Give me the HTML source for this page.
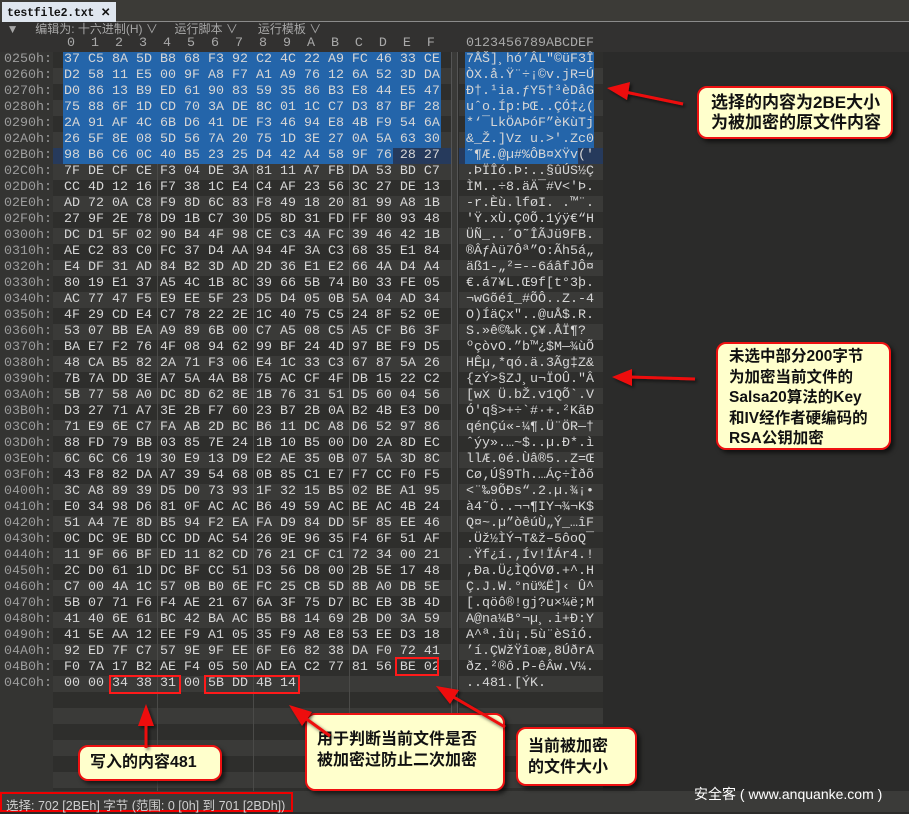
<!DOCTYPE html>
<html><head><meta charset="utf-8"><style>
*{margin:0;padding:0;box-sizing:border-box}
body{width:909px;height:812px;overflow:hidden;background:#2b2b2a;position:relative;font-family:"Liberation Mono",monospace;}
.a{position:absolute}
#top{left:0;top:0;width:909px;height:22px;background:#3c3b37}
#tab{left:2px;top:2px;width:114px;height:20px;background:#dfe6ef;font:bold 11.5px "Liberation Mono",monospace;color:#111;padding:3px 0 0 5px;white-space:nowrap;letter-spacing:-0.2px}
#tl{left:116px;top:21px;width:793px;height:2px;background:#8b8b8b}
#tb{left:0;top:22px;width:909px;height:15px;background:#323130;font:12px "Liberation Sans","Noto Sans CJK SC",sans-serif;color:#a7a7a7;white-space:pre;line-height:15px}
#ch{left:0;top:37px;width:909px;height:15px;background:#323130}
.hd{font-size:13.33px;color:#a9a9a9;white-space:pre;line-height:14px}
#offc{left:0;top:52px;width:53px;height:740px;background:#343432}
.band{position:absolute;height:16px}
.L{background:#3a3a38}
.D{background:#2e2e2c}
.t{position:absolute;font-size:13.33px;line-height:16px;white-space:pre;color:#d6d6d6}
.o{left:4px;color:#9d9d9d}
.h{left:64px}
.s{left:466px}
.div{position:absolute;top:52px;width:1px;height:740px;background:#4a4a48}
#sep{left:451px;top:52px;width:7px;height:740px;background:#3a3a38;border-left:1px solid #555;border-right:1px solid #555}
#status{left:0;top:791px;width:909px;height:21px;background:#3b3b39}
#stt{left:0;top:792px;width:293px;height:20px;border:2px solid #e00;font:12.5px "Liberation Sans","Noto Sans CJK SC",sans-serif;color:#cfcfcf;padding:1px 0 0 4px;white-space:pre}
.box{position:absolute;background:#ffffcc;border:2px solid #ee1111;border-radius:10px;box-shadow:3px 3px 4px rgba(0,0,0,.6);font:bold 16px "Liberation Sans","Noto Sans CJK SC",sans-serif;color:#111;}
.rb{position:absolute;border:2px solid #ff1a1a;height:19px}
#wm{left:694px;top:784px;font:14px "Liberation Sans","Noto Sans CJK SC",sans-serif;color:#fff;white-space:pre}
</style></head><body>
<div class="a" id="top"></div>
<div class="a" id="tab">testfile2.txt ✕</div>
<div class="a" id="tl"></div>
<div class="a" id="tb">  ▼     编辑为: 十六进制(H) ∨     运行脚本 ∨      运行模板 ∨</div>
<div class="a" id="ch"></div>
<div class="a hd" style="left:67px;top:37px">0  1  2  3  4  5  6  7  8  9  A  B  C  D  E  F</div>
<div class="a hd" style="left:466px;top:37px">0123456789ABCDEF</div>
<div class="a" id="offc"></div>

<div style="position:absolute;left:53px;top:52px;width:398px;height:740px;background:repeating-linear-gradient(#2e2e2c 0 16px,#3a3a38 16px 32px)"></div>
<div style="position:absolute;left:53px;top:148px;width:398px;height:16px;background:#263a5c"></div>
<div style="position:absolute;left:459px;top:52px;width:144px;height:740px;background:repeating-linear-gradient(#2e2e2c 0 16px,#3a3a38 16px 32px)"></div>
<div style="position:absolute;left:459px;top:148px;width:144px;height:16px;background:#263a5c"></div>
<div class="a" id="sep"></div>
<div class="div" style="left:157px"></div>
<div class="div" style="left:253px"></div>
<div class="div" style="left:349px"></div>

<div class="a" style="left:63px;top:52px;width:378px;height:96px;background:#2465aa"></div>
<div class="a" style="left:63px;top:148px;width:330px;height:16px;background:#2465aa"></div>
<div class="a" style="left:465px;top:52px;width:129px;height:96px;background:#2465aa"></div>
<div class="a" style="left:465px;top:148px;width:113px;height:16px;background:#2465aa"></div>

<div class="t o" style="top:52px">0250h:
0260h:
0270h:
0280h:
0290h:
02A0h:
02B0h:
02C0h:
02D0h:
02E0h:
02F0h:
0300h:
0310h:
0320h:
0330h:
0340h:
0350h:
0360h:
0370h:
0380h:
0390h:
03A0h:
03B0h:
03C0h:
03D0h:
03E0h:
03F0h:
0400h:
0410h:
0420h:
0430h:
0440h:
0450h:
0460h:
0470h:
0480h:
0490h:
04A0h:
04B0h:
04C0h:</div>
<div class="t h" style="top:52px">37 C5 8A 5D B8 68 F3 92 C2 4C 22 A9 FC 46 33 CE
D2 58 11 E5 00 9F A8 F7 A1 A9 76 12 6A 52 3D DA
D0 86 13 B9 ED 61 90 83 59 35 86 B3 E8 44 E5 47
75 88 6F 1D CD 70 3A DE 8C 01 1C C7 D3 87 BF 28
2A 91 AF 4C 6B D6 41 DE F3 46 94 E8 4B F9 54 6A
26 5F 8E 08 5D 56 7A 20 75 1D 3E 27 0A 5A 63 30
98 B6 C6 0C 40 B5 23 25 D4 42 A4 58 9F 76 28 27
7F DE CF CE F3 04 DE 3A 81 11 A7 FB DA 53 BD C7
CC 4D 12 16 F7 38 1C E4 C4 AF 23 56 3C 27 DE 13
AD 72 0A C8 F9 8D 6C 83 F8 49 18 20 81 99 A8 1B
27 9F 2E 78 D9 1B C7 30 D5 8D 31 FD FF 80 93 48
DC D1 5F 02 90 B4 4F 98 CE C3 4A FC 39 46 42 1B
AE C2 83 C0 FC 37 D4 AA 94 4F 3A C3 68 35 E1 84
E4 DF 31 AD 84 B2 3D AD 2D 36 E1 E2 66 4A D4 A4
80 19 E1 37 A5 4C 1B 8C 39 66 5B 74 B0 33 FE 05
AC 77 47 F5 E9 EE 5F 23 D5 D4 05 0B 5A 04 AD 34
4F 29 CD E4 C7 78 22 2E 1C 40 75 C5 24 8F 52 0E
53 07 BB EA A9 89 6B 00 C7 A5 08 C5 A5 CF B6 3F
BA E7 F2 76 4F 08 94 62 99 BF 24 4D 97 BE F9 D5
48 CA B5 82 2A 71 F3 06 E4 1C 33 C3 67 87 5A 26
7B 7A DD 3E A7 5A 4A B8 75 AC CF 4F DB 15 22 C2
5B 77 58 A0 DC 8D 62 8E 1B 76 31 51 D5 60 04 56
D3 27 71 A7 3E 2B F7 60 23 B7 2B 0A B2 4B E3 D0
71 E9 6E C7 FA AB 2D BC B6 11 DC A8 D6 52 97 86
88 FD 79 BB 03 85 7E 24 1B 10 B5 00 D0 2A 8D EC
6C 6C C6 19 30 E9 13 D9 E2 AE 35 0B 07 5A 3D 8C
43 F8 82 DA A7 39 54 68 0B 85 C1 E7 F7 CC F0 F5
3C A8 89 39 D5 D0 73 93 1F 32 15 B5 02 BE A1 95
E0 34 98 D6 81 0F AC AC B6 49 59 AC BE AC 4B 24
51 A4 7E 8D B5 94 F2 EA FA D9 84 DD 5F 85 EE 46
0C DC 9E BD CC DD AC 54 26 9E 96 35 F4 6F 51 AF
11 9F 66 BF ED 11 82 CD 76 21 CF C1 72 34 00 21
2C D0 61 1D DC BF CC 51 D3 56 D8 00 2B 5E 17 48
C7 00 4A 1C 57 0B B0 6E FC 25 CB 5D 8B A0 DB 5E
5B 07 71 F6 F4 AE 21 67 6A 3F 75 D7 BC EB 3B 4D
41 40 6E 61 BC 42 BA AC B5 B8 14 69 2B D0 3A 59
41 5E AA 12 EE F9 A1 05 35 F9 A8 E8 53 EE D3 18
92 ED 7F C7 57 9E 9F EE 6F E6 82 38 DA F0 72 41
F0 7A 17 B2 AE F4 05 50 AD EA C2 77 81 56 BE 02
00 00 34 38 31 00 5B DD 4B 14</div>
<div class="t s" style="top:52px">7ÅŠ]¸hó’ÂL"©üF3Î
ÒX.å.Ÿ¨÷¡©v.jR=Ú
Ð†.¹ia.ƒY5†³èDåG
uˆo.Íp:ÞŒ..ÇÓ‡¿(
*‘¯LkÖAÞóF”èKùTj
&amp;_Ž.]Vz u.&gt;'.Zc0
˜¶Æ.@µ#%ÔB¤XŸv('
.ÞÏÎó.Þ:..§ûÚS½Ç
ÌM..÷8.äÄ¯#V&lt;'Þ.
-r.Èù.lføI. .™¨.
'Ÿ.xÙ.Ç0Õ.1ýÿ€“H
ÜÑ_..´O˜ÎÃJü9FB.
®ÂƒÀü7Ôª”O:Ãh5á„
äß1-„²=--6áâfJÔ¤
€.á7¥L.Œ9f[t°3þ.
¬wGõéî_#ÕÔ..Z.-4
O)ÍäÇx"..@uÅ$.R.
S.»ê©‰k.Ç¥.ÅÏ¶?
ºçòvO.”b™¿$M—¾ùÕ
HÊµ‚*qó.ä.3Ãg‡Z&amp;
{zÝ&gt;§ZJ¸u¬ÏOÛ."Â
[wX Ü.bŽ.v1QÕ`.V
Ó'q§&gt;+÷`#·+.²KãÐ
qénÇú«-¼¶.Ü¨ÖR—†
ˆýy».…~$..µ.Ð*.ì
llÆ.0é.Ùâ®5..Z=Œ
Cø‚Ú§9Th.…Áç÷Ìðõ
&lt;¨‰9ÕÐs“.2.µ.¾¡•
à4˜Ö..¬¬¶IY¬¾¬K$
Q¤~.µ”òêúÙ„Ý_…îF
.Üž½ÌÝ¬T&amp;ž–5ôoQ¯
.Ÿf¿í.‚Ív!ÏÁr4.!
,Ða.Ü¿ÌQÓVØ.+^.H
Ç.J.W.°nü%Ë]‹ Û^
[.qöô®!gj?u×¼ë;M
A@na¼B°¬µ¸.i+Ð:Y
A^ª.îù¡.5ù¨èSîÓ.
’í.ÇWžŸîoæ‚8ÚðrA
ðz.²®ô.P-êÂw.V¼.
..481.[ÝK.</div>

<div class="rb" style="left:395px;top:657px;width:44px"></div>
<div class="rb" style="left:109px;top:675px;width:72px"></div>
<div class="rb" style="left:204px;top:675px;width:96px"></div>

<div class="a" id="status"></div>
<div class="a" id="stt">选择: 702 [2BEh] 字节 (范围: 0 [0h] 到 701 [2BDh])</div>
<div class="a" id="wm">安全客 ( www.anquanke.com )</div>

<div class="box" style="left:697px;top:86px;width:196px;height:53px;font-size:17px;line-height:20px;padding:5px 0 0 12px">选择的内容为2BE大小<br>为被加密的原文件内容</div>
<div class="box" style="left:716px;top:342px;width:175px;height:108px;font-size:15.5px;line-height:20.5px;padding:3px 0 0 11px">未选中部分200字节<br>为加密当前文件的<br>Salsa20算法的Key<br>和IV经作者硬编码的<br>RSA公钥加密</div>
<div class="box" style="left:78px;top:745px;width:144px;height:36px;font-size:16px;line-height:30px;padding:1px 0 0 10px">写入的内容481</div>
<div class="box" style="left:305px;top:713px;width:200px;height:78px;font-size:16px;line-height:21px;padding:14px 0 0 10px">用于判断当前文件是否<br>被加密过防止二次加密</div>
<div class="box" style="left:516px;top:727px;width:121px;height:59px;font-size:16px;line-height:21px;padding:7px 0 0 10px">当前被加密<br>的文件大小</div>

<svg class="a" style="left:0;top:0" width="909" height="812">
<defs><filter id="sh"><feDropShadow dx="2" dy="2" stdDeviation="1.5" flood-opacity=".6"/></filter></defs>
<g fill="#ee1111" stroke="#ee1111" stroke-width="3" filter="url(#sh)">
<line x1="683" y1="104" x2="625" y2="92"/><polygon stroke-width="0" points="607,88 630,82 627,100"/>
<line x1="695" y1="379" x2="630" y2="377"/><polygon stroke-width="0" points="612,377 632,369 632,386"/>
<line x1="146" y1="748" x2="146" y2="722"/><polygon stroke-width="0" points="146,704 138,726 154,726"/>
<line x1="330" y1="736" x2="301" y2="715"/><polygon stroke-width="0" points="289,705 312,712 302,726"/>
<line x1="505" y1="727" x2="450" y2="695"/><polygon stroke-width="0" points="436,686 459,690 450,704"/>
</g>
</svg>
</body></html>
